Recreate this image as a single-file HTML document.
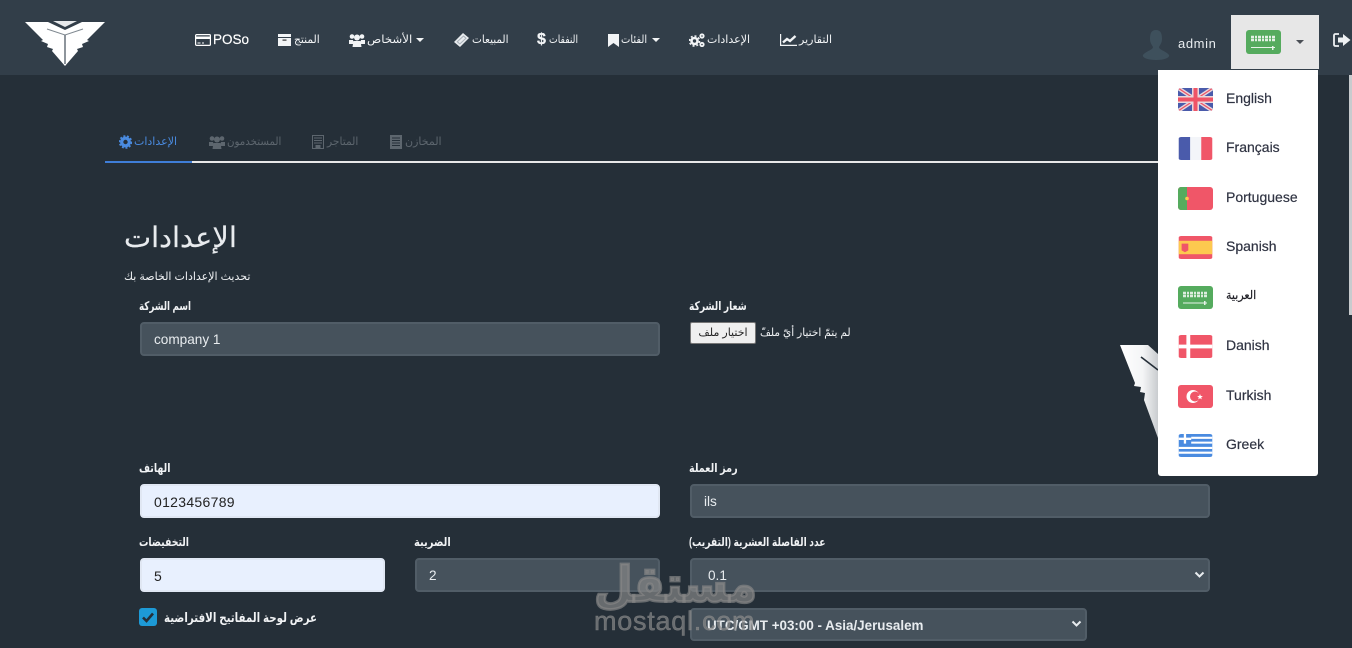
<!DOCTYPE html>
<html lang="ar">
<head>
<meta charset="utf-8">
<style>
*{box-sizing:border-box}
html,body{margin:0;padding:0;width:1352px;height:648px;overflow:hidden;background:#252f38;font-family:"Liberation Sans","DejaVu Sans",sans-serif;color:#fff}
.a{position:absolute;white-space:nowrap}
#nav{position:absolute;left:0;top:0;width:1352px;height:75px;background:#323e49}
.n{font-size:11px;color:#f2f4f6;line-height:16px;direction:rtl;transform-origin:left center}
.tab{font-size:11px;color:#5d666e;line-height:16px;direction:rtl;transform-origin:left center}
.l{font-size:12px;font-weight:bold;color:#f0f2f4;line-height:16px;direction:rtl;transform-origin:left center}
.i{position:absolute;height:34px;border-radius:4px;background:#46525c;border:2px solid #515d67;color:#e8ecef;font-size:13.6px;line-height:32px;padding-left:12px}
.w{background:#e8f0fe;border-color:#e0e7f3;color:#222;font-size:14px}
.li{position:absolute;left:1226px;font-size:14px;color:#2f3342;line-height:18px;font-weight:normal;-webkit-text-stroke:.2px #2f3342}
.f{position:absolute;left:1178px;width:35px;height:23px;border-radius:3px;overflow:hidden}
svg{display:block}
</style>
</head>
<body>
<div id="nav"></div>

<svg class="a" style="left:25px;top:21px" width="81" height="46" viewBox="0 0 81 46">
<path d="M0 1H23L40 9L57 1H80L62 19L64 20L57 23L58 26L52 28L53 30L40 45L27 30L28 28L22 26L23 23L16 20L18 19Z" fill="#fff"/>
<path d="M28 0H52L40 6Z" fill="#e8eaec"/>
<path d="M22 8L40 14L58 8" fill="none" stroke="#7f8890" stroke-width="1"/>
<path d="M40 14V43" stroke="#727b83" stroke-width="1.6"/>
</svg>

<svg class="a" style="left:195px;top:34px" width="16" height="12" viewBox="0 0 16 12"><rect x=".6" y=".6" width="14.8" height="10.8" rx="1" fill="none" stroke="#fff" stroke-width="1.2"/><rect x="1" y="2.5" width="14" height="2.5" fill="#fff"/><path d="M2.5 9h3M7 9h2" stroke="#fff"/></svg>
<div class="a" style="left:213px;top:32px;font-size:13.5px;line-height:16px;color:#fff;-webkit-text-stroke:.2px #fff">POSo</div>

<svg class="a" style="left:278px;top:34px" width="13" height="12" viewBox="0 0 13 12"><path d="M0 0H13V3H0ZM0 4H13V12H0Z" fill="#f2f4f6"/><rect x="4.5" y="5.5" width="4" height="1.2" fill="#333"/></svg>
<div class="a n" style="left:294px;top:32px;transform:scaleX(.97)">المنتج</div>

<svg class="a" style="left:349px;top:33px" width="16" height="14" viewBox="0 0 16 14"><g fill="#f2f4f6"><circle cx="3" cy="3.5" r="2.3"/><circle cx="13" cy="3.5" r="2.3"/><circle cx="8" cy="4.5" r="3"/><path d="M0 7h4l1 4H0ZM12 7h4v4h-5Z"/><path d="M4.5 8h7l1 6h-9Z"/></g></svg>
<div class="a n" style="left:367px;top:32px;transform:scaleX(1.07)">الأشخاص</div>
<div class="a" style="left:416px;top:38px;border-top:4px solid #f2f4f6;border-left:4px solid transparent;border-right:4px solid transparent"></div>

<svg class="a" style="left:454px;top:33px" width="15" height="14" viewBox="0 0 15 14"><path d="M9 0L15 5L6 14L0 9Z" fill="#e8ebee"/><path d="M9.5 3L12 5.2L5.8 11L3.3 8.8Z" fill="none" stroke="#a8b0b8"/></svg>
<div class="a n" style="left:472px;top:32px;transform:scaleX(.95)">المبيعات</div>

<div class="a" style="left:537px;top:31px;font-size:16px;font-weight:bold;line-height:18px;color:#f2f4f6;-webkit-text-stroke:.3px #f2f4f6">$</div>
<div class="a n" style="left:549px;top:32px;transform:scaleX(.84)">النفقات</div>

<svg class="a" style="left:608px;top:34px" width="11" height="13" viewBox="0 0 11 13"><path d="M0 0H11V13L5.5 9L0 13Z" fill="#f2f4f6"/></svg>
<div class="a n" style="left:621px;top:32px;transform:scaleX(.9)">الفئات</div>
<div class="a" style="left:652px;top:38px;border-top:4px solid #f2f4f6;border-left:4px solid transparent;border-right:4px solid transparent"></div>

<svg class="a" style="left:689px;top:33px" width="16" height="14" viewBox="0 0 16 14"><circle cx="5.5" cy="8" r="3" fill="none" stroke="#f2f4f6" stroke-width="2.6"/><circle cx="5.5" cy="8" r="5" fill="none" stroke="#f2f4f6" stroke-width="1.6" stroke-dasharray="2 1.9"/><circle cx="13" cy="3" r="1.7" fill="none" stroke="#f2f4f6" stroke-width="1.8"/><circle cx="13" cy="11.5" r="1.7" fill="none" stroke="#f2f4f6" stroke-width="1.8"/></svg>
<div class="a n" style="left:707px;top:32px">الإعدادات</div>

<svg class="a" style="left:780px;top:34px" width="17" height="12" viewBox="0 0 17 12"><path d="M.6 0V11.4H17" fill="none" stroke="#f2f4f6" stroke-width="1.2"/><path d="M3 8.5L7 5L10 7L15.5 2" fill="none" stroke="#f2f4f6" stroke-width="2.4"/></svg>
<div class="a n" style="left:799px;top:32px">التقارير</div>

<svg class="a" style="left:1142px;top:30px" width="28" height="30" viewBox="0 0 28 30"><path d="M14 0C9 0 8 4 8 9C8 13 10 15 11 17C11 20 4 21 1 25C0 27 4 30 14 30C24 30 28 27 27 25C24 21 17 20 17 17C18 15 20 13 20 9C20 4 19 0 14 0Z" fill="#3e505c"/></svg>
<div class="a" style="left:1178px;top:36px;font-size:13px;line-height:16px;letter-spacing:.6px;color:#e8ecef">admin</div>

<div class="a" style="left:1231px;top:15px;width:88px;height:54px;background:#e7e7e7"></div>
<svg class="a" style="left:1246px;top:30px;border-radius:3px" width="35" height="24" viewBox="0 0 35 24"><rect width="35" height="24" fill="#55ab5e"/><path d="M5 7H30M5 10H30" stroke="#e3f0e4" stroke-width="2.6" stroke-dasharray="3 1 2 1"/><path d="M5 17.5H29" stroke="#e8f3e9"/><rect x="26" y="16" width="1.5" height="4" fill="#e8f3e9"/></svg>
<div class="a" style="left:1296px;top:40px;border-top:4px solid #4a4f55;border-left:4px solid transparent;border-right:4px solid transparent"></div>

<svg class="a" style="left:1333px;top:33px" width="18" height="14" viewBox="0 0 18 14"><path d="M6 1H2.5Q1 1 1 2.5V11.5Q1 13 2.5 13H6" fill="none" stroke="#eef1f3" stroke-width="1.8"/><path d="M5 4.5H10V1L17.5 7L10 13V9.5H5Z" fill="#eef1f3"/></svg>

<!-- tabs -->
<div class="a" style="left:105px;top:161px;width:1055px;height:2px;background:#e8e8e8"></div>
<div class="a" style="left:105px;top:161px;width:87px;height:2px;background:#3f7ed8"></div>
<svg class="a" style="left:119px;top:135px" width="13" height="14" viewBox="0 0 13 14"><circle cx="6.5" cy="7" r="3.8" fill="none" stroke="#4a8be0" stroke-width="3.2"/><circle cx="6.5" cy="7" r="6" fill="none" stroke="#4a8be0" stroke-width="1.6" stroke-dasharray="2 1.7"/></svg>
<div class="a tab" style="left:134px;top:134px;color:#4a8be0">الإعدادات</div>
<svg class="a" style="left:209px;top:135px" width="16" height="14" viewBox="0 0 16 14"><g fill="#5d666e"><circle cx="3" cy="3.5" r="2.3"/><circle cx="13" cy="3.5" r="2.3"/><circle cx="8" cy="4.5" r="3"/><path d="M0 7h4l1 4H0ZM12 7h4v4h-5Z"/><path d="M4.5 8h7l1 6h-9Z"/></g></svg>
<div class="a tab" style="left:227px;top:134px;transform:scaleX(.93)">المستخدمون</div>
<svg class="a" style="left:312px;top:135px" width="12" height="14" viewBox="0 0 12 14"><rect x=".5" y=".5" width="11" height="13" fill="none" stroke="#5d666e"/><path d="M2 3h8M2 5.5h8M2 8h8M4 10.5h4V14H4Z" stroke="#5d666e" fill="#5d666e"/></svg>
<div class="a tab" style="left:327px;top:134px;transform:scaleX(.97)">المتاجر</div>
<svg class="a" style="left:390px;top:135px" width="12" height="14" viewBox="0 0 12 14"><rect width="12" height="14" fill="#5d666e"/><path d="M2 3h8M2 5.5h8M2 8h8M2 10.5h8" stroke="#252f38"/></svg>
<div class="a tab" style="left:405px;top:134px">المخازن</div>

<!-- heading -->
<div class="a" style="left:124px;top:218px;font-size:28px;line-height:40px;direction:rtl;color:#e8ebee;transform:scaleX(1.03);transform-origin:left center;-webkit-text-stroke:.2px #e8ebee">الإعدادات</div>
<div class="a" style="left:124px;top:269px;font-size:11px;line-height:16px;direction:rtl;color:#f0f2f4">تحديث الإعدادات الخاصة بك</div>

<!-- form -->
<div class="a l" style="left:139px;top:298px;transform:scaleX(.73)">اسم الشركة</div>
<div class="i" style="left:140px;top:322px;width:520px">company 1</div>

<div class="a l" style="left:689px;top:298px;transform:scaleX(.76)">شعار الشركة</div>
<div class="a" style="left:690px;top:322px;width:66px;height:22px;background:#efefef;border:1px solid #767676;border-radius:2px;color:#222;font-size:11px;line-height:20px;text-align:center;direction:rtl">اختيار ملف</div>
<div class="a" style="left:760px;top:325px;font-size:11px;line-height:16px;direction:rtl;color:#f0f2f4;transform:scaleX(.96);transform-origin:left center">لم يتمّ اختيار أيّ ملفّ</div>

<svg class="a" style="left:1120px;top:344px" width="40" height="100" viewBox="0 0 40 100"><defs><linearGradient id="g" x1="0" x2="1" y1="0" y2="0"><stop offset="0" stop-color="#fff"/><stop offset=".6" stop-color="#f4f5f6"/><stop offset="1" stop-color="#c9cccf"/></linearGradient></defs><path d="M0 1H28L38 10V62L38 94L24 56L25 49L20 48L21 43L14 42L15 39Z" fill="url(#g)"/><path d="M21 13L38 26" stroke="#252f38" stroke-width="1.6"/><path d="M28 0H38V6Z" fill="#252f38"/></svg>

<div class="a l" style="left:139px;top:460px;transform:scaleX(.79)">الهاتف</div>
<div class="i w" style="left:140px;top:484px;width:520px;letter-spacing:.3px">0123456789</div>
<div class="a l" style="left:689px;top:460px;transform:scaleX(.8)">رمز العملة</div>
<div class="i" style="left:690px;top:484px;width:520px">ils</div>

<div class="a l" style="left:139px;top:534px;transform:scaleX(.78)">التخفيضات</div>
<div class="i w" style="left:140px;top:558px;width:245px">5</div>
<div class="a l" style="left:414px;top:534px;transform:scaleX(.825)">الضريبة</div>
<div class="i" style="left:415px;top:558px;width:245px">2</div>
<div class="a l" style="left:689px;top:534px;transform:scaleX(.765)">عدد الفاصلة العشرية (التقريب)</div>
<div class="i" style="left:690px;top:558px;width:520px;padding-left:16px">0.1</div>
<svg class="a" style="left:1194px;top:571px" width="11" height="8" viewBox="0 0 11 8"><path d="M1.5 1.5L5.5 5.5L9.5 1.5" fill="none" stroke="#e8ecef" stroke-width="2"/></svg>

<svg class="a" style="left:139px;top:608px" width="18" height="18" viewBox="0 0 18 18"><rect width="18" height="18" rx="3" fill="#1d9ad6"/><path d="M4 9.5L7.5 13L14 5.5" fill="none" stroke="#252f38" stroke-width="2.6"/></svg>
<div class="a l" style="left:164px;top:610px;font-size:13px;transform:scaleX(.79)">عرض لوحة المفاتيح الافتراضية</div>

<div class="i" style="left:690px;top:608px;width:397px;padding-left:15px;font-size:13.4px;font-weight:bold;line-height:31px;height:33px">UTC/GMT +03:00 - Asia/Jerusalem</div>
<svg class="a" style="left:1071px;top:620px" width="11" height="8" viewBox="0 0 11 8"><path d="M1.5 1.5L5.5 5.5L9.5 1.5" fill="none" stroke="#e8ecef" stroke-width="2"/></svg>

<!-- watermark -->
<div class="a" style="left:594px;top:552px;font-size:45px;font-weight:bold;line-height:60px;color:rgba(135,135,135,.68);-webkit-text-stroke:2.5px rgba(135,135,135,.68);direction:rtl;transform:scale(.99,1.1);transform-origin:left top">مستقل</div>
<div class="a" style="left:594px;top:605px;font-size:27px;line-height:32px;color:rgba(140,140,140,.68);-webkit-text-stroke:.5px rgba(140,140,140,.68);letter-spacing:.75px">mostaql.com</div>

<!-- dropdown -->
<div class="a" style="left:1158px;top:70px;width:160px;height:406px;background:#fff;border-radius:0 0 3px 3px"></div>

<svg class="f" style="top:88px" width="35" height="23" viewBox="0 0 35 23"><rect width="35" height="23" fill="#4a5bab"/><path d="M0 0L35 23M35 0L0 23" stroke="#e8d8dc" stroke-width="4"/><path d="M0 0L35 23M35 0L0 23" stroke="#ef5466" stroke-width="1.2"/><path d="M17.5 0V23M0 11.5H35" stroke="#e8d8dc" stroke-width="7"/><path d="M17.5 0V23M0 11.5H35" stroke="#ef5466" stroke-width="4"/></svg>
<div class="li" style="top:89px">English</div>

<svg class="f" style="top:137px" width="35" height="24" viewBox="0 0 35 24"><rect width="12" height="24" fill="#4a5bab"/><rect x="12" width="11.5" height="24" fill="#f3f5f9"/><rect x="23.5" width="11.5" height="24" fill="#f05668"/></svg>
<div class="li" style="top:138px">Français</div>

<svg class="f" style="top:187px" width="35" height="23" viewBox="0 0 35 23"><rect width="35" height="23" fill="#f05668"/><rect width="9" height="23" fill="#55ab5e"/><circle cx="9" cy="11.5" r="1.8" fill="#fdc94f"/></svg>
<div class="li" style="top:188px">Portuguese</div>

<svg class="f" style="top:236px" width="35" height="24" viewBox="0 0 35 24"><rect width="35" height="24" fill="#f05668"/><rect y="5" width="35" height="14" fill="#fdc94f"/><path d="M3 8H10V15L6.5 17L3 15Z" fill="#f05668"/></svg>
<div class="li" style="top:237px">Spanish</div>

<svg class="f" style="top:286px" width="35" height="23" viewBox="0 0 35 23"><rect width="35" height="23" fill="#55ab5e"/><path d="M5 7H30M5 10H30" stroke="#dcecdd" stroke-width="2.6" stroke-dasharray="3 1 2 1"/><path d="M5 17H29" stroke="#e8f3e9"/><rect x="26" y="15" width="1.5" height="4" fill="#e8f3e9"/></svg>
<div class="li" style="top:286px;font-size:12px;left:1226px;direction:rtl;color:#1d1d24;-webkit-text-stroke:.2px #1d1d24;transform:scaleX(.92);transform-origin:left center">العربية</div>

<svg class="f" style="top:335px" width="35" height="24" viewBox="0 0 35 24"><rect width="35" height="24" fill="#f05668"/><path d="M0 12H35M10 0V24" stroke="#fff" stroke-width="4"/></svg>
<div class="li" style="top:336px">Danish</div>

<svg class="f" style="top:385px" width="35" height="23" viewBox="0 0 35 23"><rect width="35" height="23" fill="#f05668"/><circle cx="15" cy="11.5" r="6.5" fill="#fff"/><circle cx="17" cy="11.5" r="5" fill="#f05668"/><path d="M22 9L22.8 11L24.9 11.1L23.2 12.4L23.8 14.4L22 13.2L20.2 14.4L20.8 12.4L19.1 11.1L21.2 11Z" fill="#fff"/></svg>
<div class="li" style="top:386px">Turkish</div>

<svg class="f" style="top:434px" width="35" height="24" viewBox="0 0 35 24"><rect width="35" height="24" fill="#4a8be0"/><path d="M13 4H35M13 9H35M0 14.5H35M0 19.5H35" stroke="#fff" stroke-width="2.2"/><path d="M0 5H13M6.5 0V10" stroke="#fff" stroke-width="2.4"/></svg>
<div class="li" style="top:435px">Greek</div>

<!-- scrollbar sliver -->
<div class="a" style="left:1349px;top:75px;width:3px;height:240px;background:#c8cbce"></div>
</body>
</html>
